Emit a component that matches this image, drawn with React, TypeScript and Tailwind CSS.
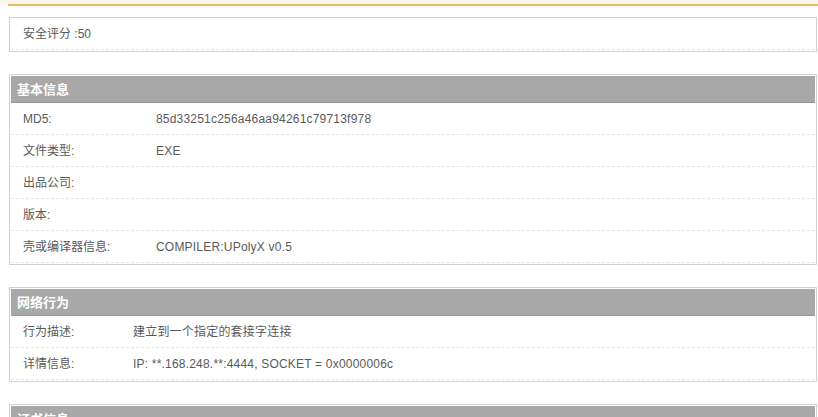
const basic = [
  { label: 'MD5:', value: '85d33251c256a46aa94261c79713f978' },
  { label: '文件类型:', value: 'EXE' },
  { label: '出品公司:', value: '' },
  { label: '版本:', value: '' },
  { label: '壳或编译器信息:', value: 'COMPILER:UPolyX v0.5' },
];

const network = [
  { label: '行为描述:', value: '建立到一个指定的套接字连接' },
  { label: '详情信息:', value: 'IP: **.168.248.**:4444, SOCKET = 0x0000006c' },
];

function Section({
  title,
  rows,
  labelWidth,
}: {
  title: string;
  rows: { label: string; value: string }[];
  labelWidth: string;
}) {
  return (
    <div className="mt-[22px] w-[808px] border border-[#d2d2d2] bg-white p-px">
      <div className="h-[27px] border-b border-[#959595] bg-[#a8a8a8] pl-[6px] text-[13px] font-bold leading-[27px] text-white">
        {title}
      </div>
      {rows.map((r) => (
        <div
          key={r.label}
          className="flex h-[32px] items-center border-b border-dashed border-[#e6e6e6] pl-[12px] text-[12px] text-[#5a5a5a]"
        >
          <div className={labelWidth}>{r.label}</div>
          <div className="tracking-[0.2px]">{r.value}</div>
        </div>
      ))}
    </div>
  );
}

export default function App() {
  return (
    <div className="min-h-screen overflow-hidden bg-white font-['Liberation_Sans','Noto_Sans_CJK_SC',sans-serif]">
      <div className="h-[4px] bg-[#fcf7ee]" />
      <div className="ml-[8px] h-[2px] bg-[#e9bb69]" />
      <div className="pl-[9px]">
        <div className="mt-[11px] w-[808px] border border-[#d2d2d2] p-px">
          <div className="flex h-[31px] items-center border-b border-dashed border-[#e0e0e0] pl-[12px] text-[12px] text-[#5a5a5a]">
            安全评分 :50
          </div>
        </div>
        <Section title="基本信息" rows={basic} labelWidth="w-[133px]" />
        <Section title="网络行为" rows={network} labelWidth="w-[110px]" />
        <Section title="证书信息" rows={[]} labelWidth="w-[110px]" />
      </div>
    </div>
  );
}
